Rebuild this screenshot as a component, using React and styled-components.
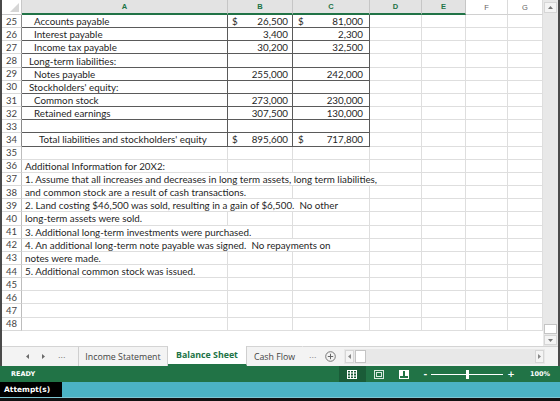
import React from 'react';
import styled, { createGlobalStyle, css } from 'styled-components';

const Global = createGlobalStyle`
  html, body { margin: 0; padding: 0; background: #fff; }
  body { width: 560px; height: 401px; overflow: hidden; }
  * { box-sizing: border-box; }
`;

const ROW_H = 13.17;
const GRID_COLS = '20px 206px 65px 77px 52px 44px 42px 35px';
const DARK = '#5a5a5a';
const LIGHT = '#dedede';
const GREEN = '#217346';

const Window = styled.div`
  width: 560px;
  height: 401px;
  display: flex;
  flex-direction: column;
  font-family: Lato, "Liberation Sans", sans-serif;
  overflow: hidden;
`;

const Top = styled.div`
  height: 346px;
  display: flex;
  border-left: 2px solid #4a4a4a;
`;

const Sheet = styled.div`
  flex: 1;
  display: flex;
  flex-direction: column;
  background: #fff;
`;

const HeaderRow = styled.div`
  display: grid;
  grid-template-columns: ${GRID_COLS};
  height: 15px;
`;

const Corner = styled.div`
  display: flex;
  align-items: flex-end;
  justify-content: flex-end;
  padding: 0 2px 2px 0;
  border-right: 1px solid #c8c8c8;
  border-bottom: 1px solid #c8c8c8;
  background: #fff;
`;

const ColHead = styled.div`
  display: flex;
  align-items: center;
  justify-content: center;
  font-family: "Liberation Sans", sans-serif;
  font-size: 7.5px;
  ${(p) =>
    p.$sel
      ? css`
          background: #e3e3e3;
          color: ${GREEN};
          font-weight: bold;
          border-right: 1px solid #c6c6c6;
          border-bottom: 2px solid ${GREEN};
        `
      : css`
          background: #fff;
          color: #666;
          border-right: 1px solid #dadada;
          border-bottom: 1px solid #d0d0d0;
        `}
`;

const Row = styled.div`
  display: grid;
  grid-template-columns: ${GRID_COLS};
  height: ${ROW_H}px;
`;

const RowNum = styled.div`
  display: flex;
  align-items: center;
  justify-content: center;
  font-size: 9.5px;
  color: #444;
  background: #fff;
  border-right: 1px solid ${(p) => (p.$dark ? '#8a8a8a' : '#bdbdbd')};
  border-bottom: 1px solid #d8d8d8;
`;

const Cell = styled.div`
  display: flex;
  align-items: center;
  font-size: 9.8px;
  color: #1f1f1f;
  white-space: pre;
  min-width: 0;
  border-right: 1px solid ${(p) => (p.$dark ? DARK : LIGHT)};
  border-bottom: 1px solid ${(p) => (p.$dark ? DARK : LIGHT)};
  padding-left: ${(p) => p.$indent || 0}px;
  overflow: visible;
`;

const Spill = styled.span`
  position: relative;
  z-index: 1;
  background: #fff;
  padding-right: 1px;
`;

const NumCell = styled(Cell)`
  justify-content: space-between;
  padding: 0 ${(p) => p.$pr}px 0 ${(p) => p.$pl}px;
`;

const Filler = styled.div`
  flex: 1;
  background: #fff;
`;

const VScroll = styled.div`
  width: 17px;
  background: #e8e8e8;
  border-right: 2px solid #4a4a4a;
  display: flex;
  flex-direction: column;
  padding: 2px 1px 1px 1px;
  gap: 1px;
`;

const ScrollBtn = styled.div`
  height: ${(p) => p.$h}px;
  background: #f4f4f4;
  border: 1px solid #d6d6d6;
  display: flex;
  align-items: center;
  justify-content: center;
`;

const Track = styled.div`
  flex: 1;
  display: flex;
  flex-direction: column;
  justify-content: flex-end;
`;

const Thumb = styled.div`
  height: 10px;
  background: #fff;
  border: 1px solid #c4c4c4;
`;

const TabBar = styled.div`
  height: 20px;
  display: flex;
  align-items: stretch;
  background: #f3f3f3;
  border-left: 2px solid #4a4a4a;
  border-right: 2px solid #4a4a4a;
`;

const NavArea = styled.div`
  display: flex;
  align-items: center;
  gap: 13px;
  padding-left: 24px;
  padding-right: 7px;
  border-top: 1px solid #d4d4d4;
  border-right: 1px solid #cfcfcf;
  width: 77px;
`;

const Dots = styled.span`
  font-family: "Liberation Sans", sans-serif;
  font-size: 9px;
  color: ${(p) => p.$c || '#777'};
  line-height: 1;
  margin-top: -3px;
`;

const Tab = styled.div`
  display: flex;
  align-items: center;
  justify-content: center;
  font-family: "Open Sans", "Liberation Sans", sans-serif;
  font-size: 8.8px;
  width: ${(p) => p.$w}px;
  ${(p) =>
    p.$active
      ? css`
          background: #fff;
          color: ${GREEN};
          font-weight: bold;
          border-bottom: 2px solid ${GREEN};
          border-right: 1px solid #cfcfcf;
        `
      : css`
          color: #444;
          border-top: 1px solid #d4d4d4;
          border-right: 1px solid ${p.$noSep ? 'transparent' : '#cfcfcf'};
        `}
`;

const TabTail = styled.div`
  display: flex;
  align-items: center;
  gap: 8px;
  padding-left: 6px;
  border-top: 1px solid #d4d4d4;
  flex: 1;
  padding-right: 13px;
`;

const HScroll = styled.div`
  flex: 1;
  height: 15px;
  display: flex;
  background: #e8e8e8;
  gap: 1px;
  padding: 1px;
`;

const HBtn = styled.div`
  width: 9px;
  background: #f4f4f4;
  border: 1px solid #d6d6d6;
  display: flex;
  align-items: center;
  justify-content: center;
`;

const HThumb = styled.div`
  width: 11px;
  background: #fff;
  border: 1px solid #c4c4c4;
`;

const HTrack = styled.div`
  flex: 1;
`;

const StatusBar = styled.div`
  height: 16px;
  background: ${GREEN};
  display: flex;
  align-items: stretch;
  color: #fff;
  font-family: "DejaVu Sans", sans-serif;
  font-size: 6.5px;
  font-weight: bold;
`;

const Ready = styled.div`
  display: flex;
  align-items: center;
  padding-left: 11px;
  flex: 1;
`;

const ViewBtn = styled.div`
  width: ${(p) => p.$w || 24}px;
  display: flex;
  align-items: center;
  justify-content: center;
  background: ${(p) => (p.$on ? '#1a5c38' : 'transparent')};
`;

const Zoom = styled.div`
  display: flex;
  align-items: center;
  padding-left: 8px;
  padding-right: 10px;
  gap: 4px;
`;

const Slider = styled.div`
  width: 72px;
  height: 1px;
  background: #fff;
  position: relative;
`;

const SliderKnob = styled.div`
  position: absolute;
  left: 35px;
  top: -4px;
  width: 3px;
  height: 9px;
  background: #fff;
`;

const ZoomSign = styled.span`
  font-size: 9px;
  line-height: 1;
`;

const Pct = styled.span`
  margin-left: 11px;
`;

const AttemptBar = styled.div`
  height: 15px;
  background: #4bb3c4;
  display: flex;
`;

const AttemptLabel = styled.div`
  width: 62px;
  background: #000;
  color: #fff;
  font-family: "DejaVu Sans", sans-serif;
  font-weight: bold;
  font-size: 7.5px;
  display: flex;
  align-items: center;
  padding-left: 4px;
`;

const BottomStrip = styled.div`
  flex: 1;
  background: #111;
  border-top: 1px solid #7fc7d3;
`;

const Tri = ({ dir, w = 4, h = 5, color = '#6a6a6a' }) => {
  const pts = {
    left: `${w},0 0,${h / 2} ${w},${h}`,
    right: `0,0 ${w},${h / 2} 0,${h}`,
    up: `0,${h} ${w / 2},0 ${w},${h}`,
    down: `0,0 ${w},0 ${w / 2},${h}`,
  }[dir];
  return (
    <svg width={w} height={h} viewBox={`0 0 ${w} ${h}`}>
      <polygon points={pts} fill={color} />
    </svg>
  );
};

const rows = [
  { n: 25, a: 'Accounts payable', ind: 12, b: '26,500', c: '81,000', $: true, box: true },
  { n: 26, a: 'Interest payable', ind: 12, b: '3,400', c: '2,300', box: true },
  { n: 27, a: 'Income tax payable', ind: 12, b: '30,200', c: '32,500', box: true },
  { n: 28, a: 'Long-term liabilities:', ind: 7, box: true },
  { n: 29, a: 'Notes payable', ind: 12, b: '255,000', c: '242,000', box: true },
  { n: 30, a: "Stockholders' equity:", ind: 7, box: true },
  { n: 31, a: 'Common stock', ind: 12, b: '273,000', c: '230,000', box: true },
  { n: 32, a: 'Retained earnings', ind: 12, b: '307,500', c: '130,000', box: true },
  { n: 33, box: true },
  { n: 34, a: "Total liabilities and stockholders' equity", ind: 17, b: '895,600', c: '717,800', $: true, box: true },
  { n: 35 },
  { n: 36, a: 'Additional Information for 20X2:', ind: 3, spill: true },
  { n: 37, a: '1. Assume that all increases and decreases in long term assets, long term liabilities,', ind: 3, spill: true },
  { n: 38, a: 'and common stock are a result of cash transactions.', ind: 3, spill: true },
  { n: 39, a: '2. Land costing $46,500 was sold, resulting in a gain of $6,500.  No other', ind: 3, spill: true },
  { n: 40, a: 'long-term assets were sold.', ind: 3, spill: true },
  { n: 41, a: '3. Additional long-term investments were purchased.', ind: 3, spill: true },
  { n: 42, a: '4. An additional long-term note payable was signed.  No repayments on', ind: 3, spill: true },
  { n: 43, a: 'notes were made.', ind: 3, spill: true },
  { n: 44, a: '5. Additional common stock was issued.', ind: 3, spill: true },
  { n: 45 },
  { n: 46 },
  { n: 47 },
  { n: 48 },
];

const cols = [
  { l: 'A', sel: true },
  { l: 'B', sel: true },
  { l: 'C', sel: true },
  { l: 'D', sel: true },
  { l: 'E', sel: true },
  { l: 'F' },
  { l: 'G' },
];

const GridIcon = () => (
  <svg width="10" height="9" viewBox="0 0 10 9">
    <rect x="0.5" y="0.5" width="9" height="8" fill="none" stroke="#fff" strokeWidth="1" />
    <line x1="3.5" y1="0" x2="3.5" y2="9" stroke="#fff" />
    <line x1="6.5" y1="0" x2="6.5" y2="9" stroke="#fff" />
    <line x1="0" y1="3" x2="10" y2="3" stroke="#fff" />
    <line x1="0" y1="6" x2="10" y2="6" stroke="#fff" />
  </svg>
);

const PageIcon = () => (
  <svg width="10" height="9" viewBox="0 0 10 9">
    <rect x="0.5" y="0.5" width="9" height="8" fill="none" stroke="#d8e8de" />
    <rect x="2.5" y="2.5" width="5" height="4" fill="none" stroke="#d8e8de" />
  </svg>
);

const BreakIcon = () => (
  <svg width="10" height="9" viewBox="0 0 10 9">
    <rect x="0.5" y="0.5" width="9" height="8" fill="none" stroke="#fff" />
    <rect x="1" y="1" width="3" height="5" fill="#fff" />
    <rect x="6" y="1" width="3" height="5" fill="#fff" />
  </svg>
);

const PlusCircle = () => (
  <svg width="11" height="11" viewBox="0 0 11 11">
    <circle cx="5.5" cy="5.5" r="4.8" fill="none" stroke="#777" />
    <line x1="5.5" y1="2.8" x2="5.5" y2="8.2" stroke="#666" />
    <line x1="2.8" y1="5.5" x2="8.2" y2="5.5" stroke="#666" />
  </svg>
);

export default function App() {
  return (
    <Window>
      <Global />
      <Top>
        <Sheet>
          <HeaderRow>
            <Corner>
              <svg width="9" height="9" viewBox="0 0 9 9">
                <polygon points="9,0 9,9 0,9" fill="#d6d6d6" />
              </svg>
            </Corner>
            {cols.map((c) => (
              <ColHead key={c.l} $sel={c.sel}>
                {c.l}
              </ColHead>
            ))}
          </HeaderRow>
          {rows.map((r) => (
            <Row key={r.n}>
              <RowNum $dark={r.box}>{r.n}</RowNum>
              <Cell $dark={r.box} $indent={r.ind}>
                {r.spill ? <Spill>{r.a}</Spill> : r.a}
              </Cell>
              {r.box ? (
                <>
                  <NumCell $dark $pl={4} $pr={4}>
                    <span>{r.$ ? '$' : ''}</span>
                    <span>{r.b || ''}</span>
                  </NumCell>
                  <NumCell $dark $pl={5} $pr={6}>
                    <span>{r.$ ? '$' : ''}</span>
                    <span>{r.c || ''}</span>
                  </NumCell>
                </>
              ) : (
                <>
                  <Cell />
                  <Cell />
                </>
              )}
              <Cell />
              <Cell />
              <Cell />
              <Cell />
            </Row>
          ))}
          <Filler />
        </Sheet>
        <VScroll>
          <ScrollBtn $h={11}>
            <Tri dir="up" w={5} h={3} color="#777" />
          </ScrollBtn>
          <Track>
            <Thumb />
          </Track>
          <ScrollBtn $h={10}>
            <Tri dir="down" w={5} h={3} color="#777" />
          </ScrollBtn>
        </VScroll>
      </Top>
      <TabBar>
        <NavArea>
          <Tri dir="left" w={3} h={5} />
          <Tri dir="right" w={3} h={5} />
          <Dots>...</Dots>
        </NavArea>
        <Tab $w={89}>Income Statement</Tab>
        <Tab $w={79} $active>
          Balance Sheet
        </Tab>
        <Tab $w={56} $noSep>
          Cash Flow
        </Tab>
        <TabTail>
          <Dots $c="#8a8a8a">...</Dots>
          <PlusCircle />
          <HScroll>
            <HBtn>
              <Tri dir="left" w={3} h={5} color="#888" />
            </HBtn>
            <HThumb />
            <HTrack />
            <HBtn>
              <Tri dir="right" w={3} h={5} color="#888" />
            </HBtn>
          </HScroll>
        </TabTail>
      </TabBar>
      <StatusBar>
        <Ready>READY</Ready>
        <ViewBtn $on $w={27}>
          <GridIcon />
        </ViewBtn>
        <ViewBtn $w={26}>
          <PageIcon />
        </ViewBtn>
        <ViewBtn $w={24}>
          <BreakIcon />
        </ViewBtn>
        <Zoom>
          <ZoomSign>-</ZoomSign>
          <Slider>
            <SliderKnob />
          </Slider>
          <ZoomSign>+</ZoomSign>
          <Pct>100%</Pct>
        </Zoom>
      </StatusBar>
      <AttemptBar>
        <AttemptLabel>Attempt(s)</AttemptLabel>
      </AttemptBar>
      <BottomStrip />
    </Window>
  );
}
